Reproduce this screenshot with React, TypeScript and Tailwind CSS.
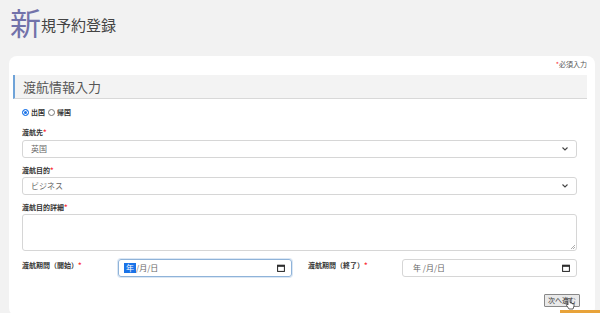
export default function App() {
  const font = { fontFamily: '"Noto Sans CJK JP", "Noto Sans", sans-serif' };
  return (
    <div className="w-[600px] h-[313px] overflow-hidden bg-[#f2f2f2] text-[#333]" style={font}>
      <div className="flex items-end pl-[10px] pt-[2px] h-[40px]">
        <span className="text-[31px] leading-[36px] text-[#7272aa]">新</span>
        <span className="text-[15px] leading-[20px] mb-[5px] text-[#444]">規予約登録</span>
      </div>
      <div className="mt-[16px] ml-[9px] w-[586px] h-[260px] bg-white rounded-[8px] pl-[4px] pr-[8px] pt-[2px]">
        <div className="flex justify-end pr-0 text-[7px] leading-[10px] text-[#555] h-[17px] pt-[1px]">
          <span className="text-red-500">*</span>必須入力
        </div>
        <div className="h-[24px] bg-[#f3f3f3] border-l-[2px] border-[#6fa3d8] border-b border-b-[#d8d8d8] flex items-center pl-[8px] text-[13px] text-[#555]">
          渡航情報入力
        </div>
        <div className="pl-[9px] pr-[10px]">
          <div className="flex items-center gap-[2px] mt-[8px] h-[10px] text-[7px] font-bold text-[#333]">
            <span className="w-[7px] h-[7px] rounded-full bg-[#1a73e8] border border-[#1a73e8] inline-block shadow-[inset_0_0_0_1px_white]"></span>
            <span>出国</span>
            <span className="w-[7px] h-[7px] rounded-full border border-[#777] inline-block ml-[1px]"></span>
            <span>帰国</span>
          </div>
          <div className="mt-[10px] text-[7px] font-bold leading-[10px]">
            渡航先<span className="text-red-500">*</span>
          </div>
          <div className="mt-[3px] h-[18px] border border-[#d6d6d6] rounded-[3px] flex items-center justify-between px-[8px] text-[8px] text-[#666]">
            <span>英国</span>
            <Chevron />
          </div>
          <div className="mt-[7px] text-[7px] font-bold leading-[10px]">
            渡航目的<span className="text-red-500">*</span>
          </div>
          <div className="mt-[2px] h-[18px] border border-[#d6d6d6] rounded-[3px] flex items-center justify-between px-[8px] text-[8px] text-[#666]">
            <span>ビジネス</span>
            <Chevron />
          </div>
          <div className="mt-[7px] text-[7px] font-bold leading-[10px]">
            渡航目的詳細<span className="text-red-500">*</span>
          </div>
          <div className="mt-[2px] h-[37px] border border-[#d6d6d6] rounded-[3px] relative">
            <svg className="absolute right-[1px] bottom-[1px]" width="5" height="5" viewBox="0 0 5 5">
              <path d="M1 5L5 1M3 5L5 3" stroke="#999" strokeWidth="0.8" />
            </svg>
          </div>
          <div className="mt-[8px] flex items-start h-[18px]">
            <div className="w-[96px] text-[7px] font-bold pt-[1px] leading-[10px]">
              渡航期間（開始）<span className="text-red-500">*</span>
            </div>
            <div className="w-[174px] h-[18px] border border-[#8fb3d9] rounded-[3px] flex items-center justify-between pl-[5px] pr-[6px] text-[8px] text-[#666] shadow-[0_0_0_1px_#dbe7f4]">
              <span className="flex items-center">
                <span className="bg-[#1a73e8] text-white px-[2px] leading-[10px]">年</span>
                <span>/月/日</span>
              </span>
              <CalendarIcon />
            </div>
            <div className="w-[94px] ml-[16px] text-[7px] font-bold pt-[1px] leading-[10px]">
              渡航期間（終了）<span className="text-red-500">*</span>
            </div>
            <div className="w-[175px] h-[18px] border border-[#d6d6d6] rounded-[3px] flex items-center justify-between pl-[10px] pr-[6px] text-[8px] text-[#666]">
              <span>年 /月/日</span>
              <CalendarIcon />
            </div>
          </div>
          <div className="flex justify-end mt-[17px] pr-0 mr-[-3px] relative">
            <button className="h-[13px] px-[3px] border border-[#888] bg-[#e9e9e9] text-[7px] leading-[11px] text-[#333] rounded-[1px]">
              次へ進む
            </button>
            <svg className="absolute right-[5px] top-[4px]" width="10" height="13" viewBox="0 0 10 13">
              <path d="M3 1v6l-1-1c-1 0-1 1 0 2l2 3h4l1-3V6l-1-.5L7 6V5l-1-.3V5l-1-.3V1C5 0 3 0 3 1z" fill="white" stroke="#222" strokeWidth="0.7" />
            </svg>
          </div>
        </div>
      </div>
      <div className="fixed left-[560px] top-[310px] w-[40px] h-[3px] bg-[#e8a33a]"></div>
    </div>
  );
}

function Chevron() {
  return (
    <svg width="6" height="4" viewBox="0 0 6 4">
      <path d="M0.5 0.5L3 3L5.5 0.5" fill="none" stroke="#444" strokeWidth="1.1" />
    </svg>
  );
}

function CalendarIcon() {
  return (
    <svg width="8" height="8" viewBox="0 0 8 8">
      <rect x="0.6" y="1.2" width="6.8" height="6.2" fill="none" stroke="#222" strokeWidth="1" />
      <rect x="0.6" y="1.2" width="6.8" height="1.6" fill="#222" />
    </svg>
  );
}
